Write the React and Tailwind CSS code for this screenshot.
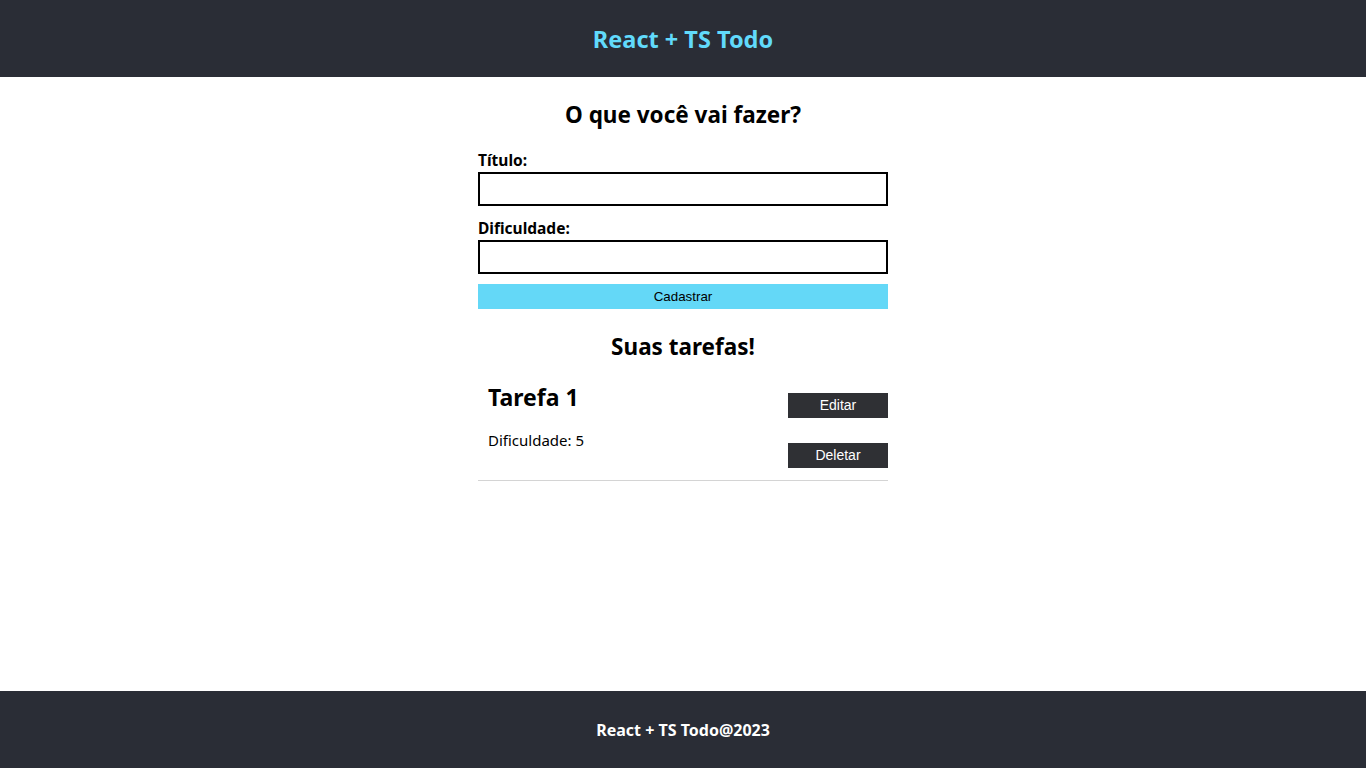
export default function App() {
  return (
    <div className="min-h-screen flex flex-col bg-white text-black font-['Noto_Sans',sans-serif]">
      <header className="h-[77px] bg-[#2a2d36] flex items-center justify-center">
        <h1 className="text-[23.5px] font-bold leading-8 text-[#61dafb]">React + TS Todo</h1>
      </header>

      <main className="flex-1 flex flex-col items-center">
        <div className="w-[410px] pt-[22px]">
          <h2 className="text-[22.5px] font-bold leading-8 text-center">O que você vai fazer?</h2>
          <form className="mt-[17px] flex flex-col" onSubmit={(e) => e.preventDefault()}>
            <label className="text-[15.5px] font-bold leading-6">Título:</label>
            <input type="text" className="h-[34px] border-2 border-black" />
            <label className="mt-[10px] text-[15.5px] font-bold leading-6">Dificuldade:</label>
            <input type="text" className="h-[34px] border-2 border-black" />
            <button className="mt-[10px] h-[25px] bg-[#64d8f7] font-['Liberation_Sans',sans-serif] text-[13.33px] text-black">
              Cadastrar
            </button>
          </form>

          <h2 className="mt-[22px] text-[22.5px] font-bold leading-8 text-center">Suas tarefas!</h2>

          <div className="mt-[18px] flex justify-between items-start border-b border-[#d4d4d4] pb-[12px]">
            <div className="pl-[10px]">
              <h3 className="text-[23px] font-bold leading-8">Tarefa 1</h3>
              <p className="mt-[15px] text-[15px] leading-6">Dificuldade: 5</p>
            </div>
            <div className="pt-[12px] flex flex-col gap-[25px]">
              <button className="w-[100px] h-[25px] bg-[#2f3034] text-white font-['Liberation_Sans',sans-serif] text-[14px]">
                Editar
              </button>
              <button className="w-[100px] h-[25px] bg-[#2f3034] text-white font-['Liberation_Sans',sans-serif] text-[14px]">
                Deletar
              </button>
            </div>
          </div>
        </div>
      </main>

      <footer className="h-[77px] bg-[#2a2d36] flex items-center justify-center">
        <p className="text-[16px] font-bold leading-6 text-white">React + TS Todo@2023</p>
      </footer>
    </div>
  );
}
